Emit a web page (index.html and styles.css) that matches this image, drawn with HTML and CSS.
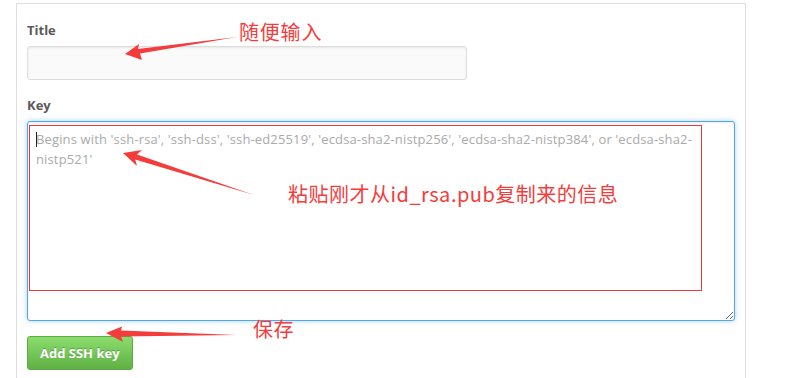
FILE: index.html
```html
<!DOCTYPE html>
<html>
<head>
  <link rel="stylesheet" href="styles.css">
</head>
<body>
  <div class="page">
    <div class="panel">
      <div class="form-group">
        <label class="field-label" for="title">Title</label>
        <input class="text-input" id="title" type="text">
      </div>
      <div class="form-group">
        <label class="field-label" for="key">Key</label>
        <div class="key-wrap">
          <textarea class="key-input" id="key" placeholder="Begins with 'ssh-rsa', 'ssh-dss', 'ssh-ed25519', 'ecdsa-sha2-nistp256', 'ecdsa-sha2-nistp384', or 'ecdsa-sha2-nistp521'"></textarea>
          <span class="caret"></span>
          <span class="mark-box"></span>
        </div>
      </div>
      <button class="btn-add">Add SSH key</button>
    </div>

    <!-- screenshot annotations -->
    <svg class="arrows" width="785" height="378" viewBox="0 0 785 378">
      <polygon points="125,54 139,44 138,49 237,37 140,53.5 142,60"/>
      <polygon points="123,153 142,150 137,154.6 254,195 135.2,159.4 137,166"/>
      <polygon points="106,333 122,326.5 121,330.5 236,335 121,336.5 123,342"/>
    </svg>
    <span class="note note-title">随便输入</span>
    <span class="note note-key">粘贴刚才从id_rsa.pub复制来的信息</span>
    <span class="note note-save">保存</span>
  </div>
</body>
</html>
```

FILE: styles.css
```css
body {
  margin: 0;
  background: #fff;
  font-family: "Open Sans", "Liberation Sans", sans-serif;
  overflow: hidden;
}

.page {
  position: relative;
  width: 785px;
  height: 378px;
  overflow: hidden;
}

.panel {
  margin: 3px 0 0 16px;
  width: 708px;
  height: 357px;
  padding: 17px 10px 0 10px;
  border: 1px solid #ddd;
  border-bottom: none;
}

.form-group {
  margin-bottom: 16px;
}

.field-label {
  display: block;
  font-size: 13px;
  font-weight: bold;
  line-height: 18px;
  color: #5a5a5a;
  margin-bottom: 7px;
}

.text-input {
  display: block;
  box-sizing: border-box;
  width: 440px;
  height: 34px;
  margin: 0;
  padding: 7px 8px;
  background: #fafafa;
  border: 1px solid #ddd;
  border-radius: 3px;
  box-shadow: inset 0 1px 2px rgba(0, 0, 0, 0.075);
  font: inherit;
  font-size: 13px;
  outline: none;
}

.key-wrap {
  position: relative;
}

.key-input {
  display: block;
  box-sizing: border-box;
  width: 708px;
  height: 200px;
  margin: 0;
  padding: 7px 8px;
  background: #fff;
  border: 1px solid #51a7e8;
  border-radius: 3px;
  box-shadow: inset 0 1px 2px rgba(0, 0, 0, 0.075), 0 0 5px rgba(81, 167, 232, 0.5);
  font-family: "Open Sans", "Liberation Sans", sans-serif;
  font-size: 13px;
  letter-spacing: 0.14px;
  line-height: 20px;
  color: #333;
  outline: none;
}

.key-input::placeholder {
  color: #aaa;
}

.caret {
  position: absolute;
  left: 9px;
  top: 11px;
  width: 1px;
  height: 15px;
  background: #222;
}

.mark-box {
  position: absolute;
  left: 2px;
  top: 4px;
  width: 671px;
  height: 164px;
  border: 1px solid #e63a3a;
  pointer-events: none;
}

.btn-add {
  display: block;
  height: 34px;
  margin: -1px 0 0;
  padding: 0 12px;
  font-family: "Open Sans", "Liberation Sans", sans-serif;
  font-size: 13px;
  font-weight: bold;
  color: #fff;
  text-shadow: 0 -1px 0 rgba(0, 0, 0, 0.25);
  background: linear-gradient(#8add6d, #60b044);
  border: 1px solid #5ca941;
  border-radius: 3px;
}

/* annotations */
.arrows {
  position: absolute;
  left: 0;
  top: 0;
  pointer-events: none;
}

.arrows polygon {
  fill: #f43c3c;
}

.note {
  position: absolute;
  font-family: "Noto Sans CJK SC", sans-serif;
  font-size: 20px;
  line-height: 24px;
  letter-spacing: 0.5px;
  color: #f43c3c;
  white-space: nowrap;
}

.note-title {
  left: 239px;
  top: 20px;
  letter-spacing: 0.8px;
}

.note-key {
  left: 288px;
  top: 182px;
}

.note-save {
  left: 253px;
  top: 317px;
}
```
